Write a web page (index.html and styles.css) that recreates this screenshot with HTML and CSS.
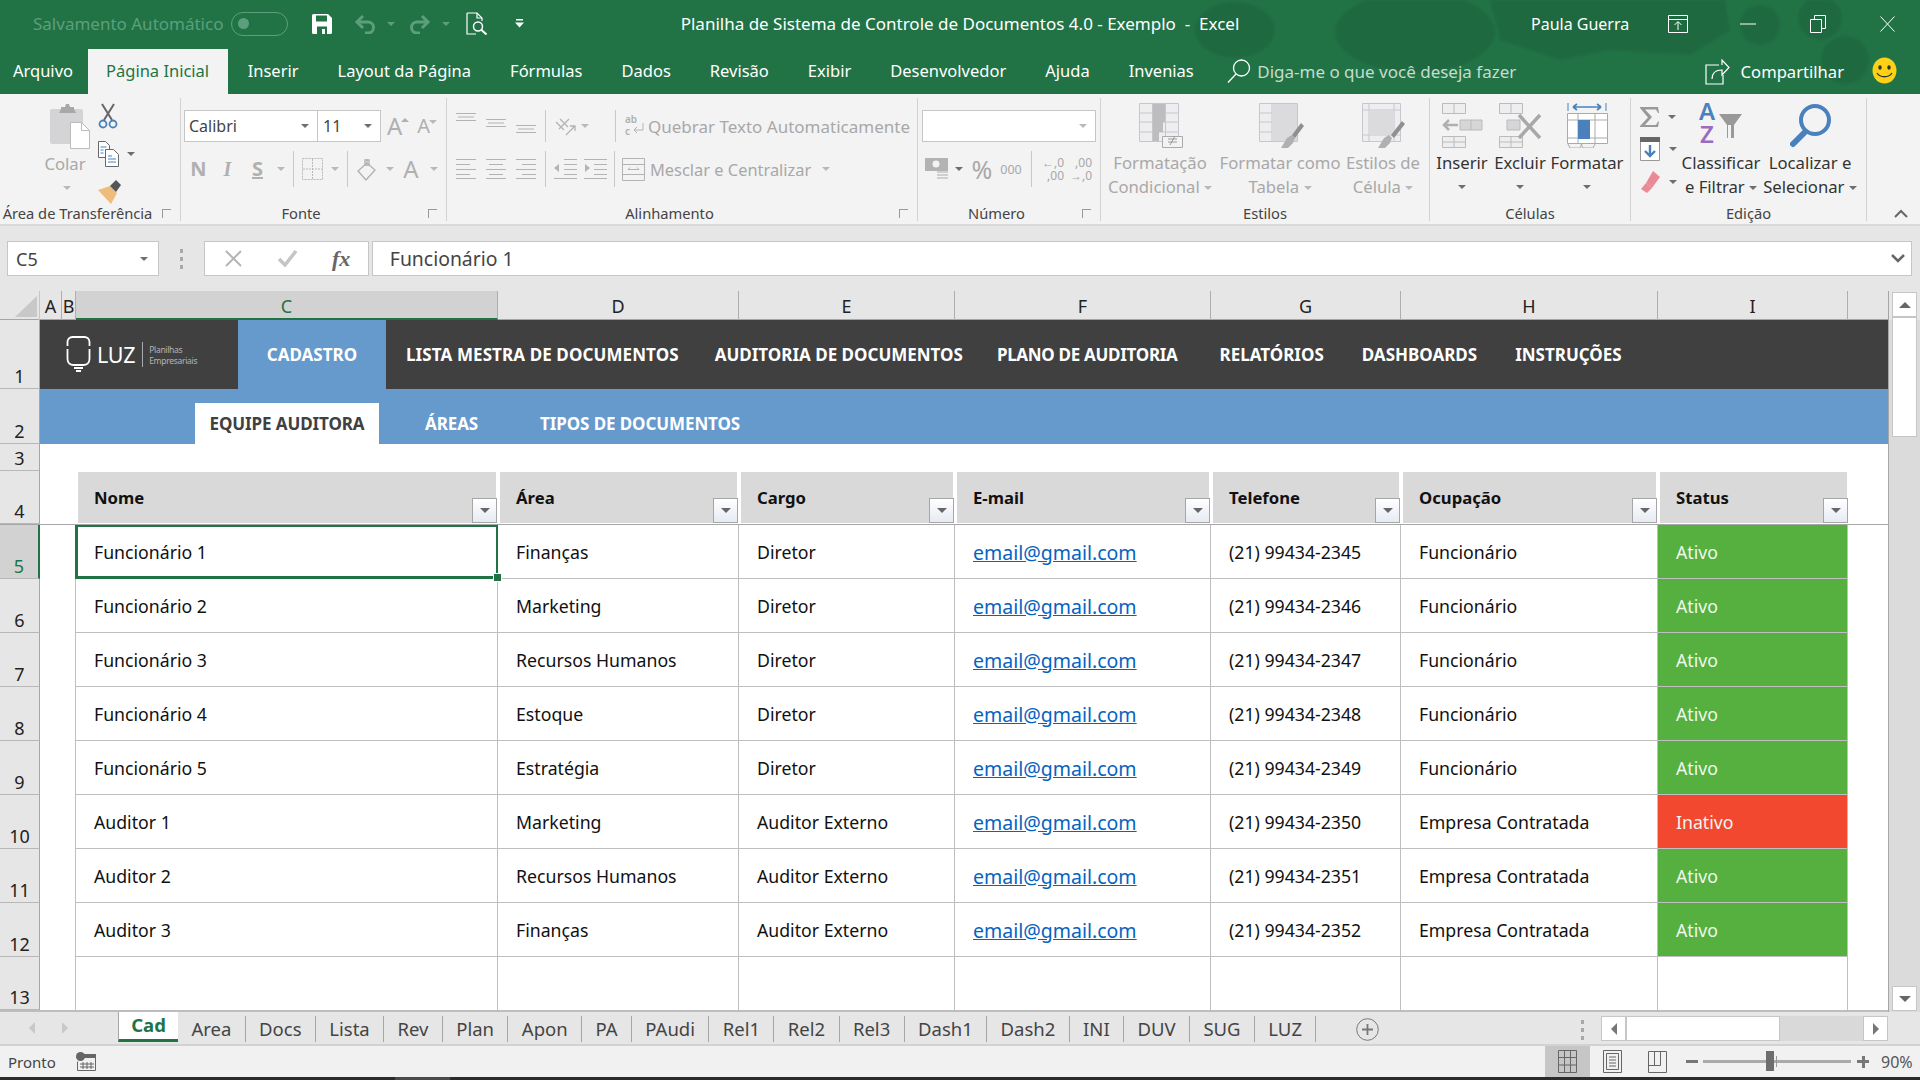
FILE: index.html
```html
<!DOCTYPE html>
<html lang="pt-BR">
<head>
    <meta charset="UTF-8">
    <title>Planilha de Sistema de Controle de Documentos 4.0 - Exemplo - Excel</title>
    <link rel="stylesheet" href="styles.css">
</head>
<body>
    <header class="app-head">
        <svg class="head-pattern" width="800" height="94" viewBox="0 0 800 94">
            <g fill="#1f633f">
                <ellipse cx="115" cy="30" rx="40" ry="28"/>
                <ellipse cx="295" cy="32" rx="80" ry="40"/>
                <path d="M370 0h235l5 30-40 25-80-5-50 10-60-20z"/>
                <circle cx="640" cy="25" r="20"/>
                <circle cx="700" cy="18" r="22"/>
                <circle cx="725" cy="60" r="24"/>
            </g>
        </svg>
        <div class="title-row">
            <div class="qat">
                <span class="autosave">Salvamento Automático</span>
                <span class="toggle"><i></i></span>
                <svg class="qa-save" width="20" height="20" viewBox="0 0 20 20"><path d="M0 1.5A1.5 1.5 0 0 1 1.500 0H16l4 4v14.500a1.500 1.500 0 0 1-1.500 1.500h-17A1.500 1.500 0 0 1 0 18.500z" fill="#fff"/><path d="M4 1.500h11v6H4z" fill="#217346"/><path d="M5 12.500h10V20h-2v-5h-3v5H5z" fill="#217346"/></svg>
                <svg class="qa-undo" width="22" height="20" viewBox="0 0 22 20" fill="none" stroke="#5d9f7c" stroke-width="3"><path d="M9 2 3 8l6 6"/><path d="M3 8h11a5.500 5.500 0 0 1 0 11h-3"/></svg>
                <span class="caret qa-c1"></span>
                <svg class="qa-redo" width="22" height="20" viewBox="0 0 22 20" fill="none" stroke="#5d9f7c" stroke-width="3"><path d="m13 2 6 6-6 6"/><path d="M19 8H8a5.500 5.500 0 0 0 0 11h3"/></svg>
                <span class="caret qa-c2"></span>
                <svg class="qa-print" width="22" height="23" viewBox="0 0 22 23" fill="none" stroke="#fff" stroke-width="1.200"><path d="M1 1h10l5 5v3M1 1v21h9"/><path d="M11 1v5h5"/><circle cx="12" cy="14.500" r="4.500" stroke-width="1.500"/><path d="m15.500 18 5 4.500" stroke-width="2"/></svg>
                <svg class="qa-more" width="9" height="9" viewBox="0 0 9 9"><path d="M1 0h7v1.500H1zM0 3.500h9L4.500 8.500z" fill="#fff"/></svg>
            </div>
            <div class="doc-title">Planilha de Sistema de Controle de Documentos 4.0 - Exemplo &nbsp;- &nbsp;Excel</div>
            <div class="win-controls">
                <span class="user">Paula Guerra</span>
                <svg class="wc-ribbon" width="20" height="18" viewBox="0 0 20 18" fill="none" stroke="#fff"><path d="M.5.500h19v17H.5zM.5 4.500h19M10 15V7M6.500 10 10 6.500l3.500 3.500"/></svg>
                <svg class="wc-min" width="16" height="2" viewBox="0 0 16 2"><path d="M0 1h16" stroke="#fff"/></svg>
                <svg class="wc-max" width="16" height="18" viewBox="0 0 16 18" fill="none" stroke="#fff"><path d="M.5 4.500h11v13H.5zM4.500 4.500v-4h11v13h-4"/></svg>
                <svg class="wc-close" width="15" height="16" viewBox="0 0 15 16" fill="none" stroke="#fff"><path d="m.5.500 14 15M14.500.500l-14 15"/></svg>
            </div>
        </div>
        <nav class="tab-row">
            <a class="rtab first">Arquivo</a>
            <a class="rtab active">Página Inicial</a>
            <a class="rtab">Inserir</a>
            <a class="rtab">Layout da Página</a>
            <a class="rtab">Fórmulas</a>
            <a class="rtab">Dados</a>
            <a class="rtab">Revisão</a>
            <a class="rtab">Exibir</a>
            <a class="rtab">Desenvolvedor</a>
            <a class="rtab">Ajuda</a>
            <a class="rtab">Invenias</a>
            <span class="tell-me">
                <svg width="24" height="24" viewBox="0 0 24 24" fill="none" stroke="#fff" stroke-width="1.300"><circle cx="14.500" cy="9" r="8"/><path d="M9 15 1 23.500"/></svg>
                Diga-me o que você deseja fazer
            </span>
            <span class="share">
                <svg width="25" height="26" viewBox="0 0 25 26" fill="none" stroke="#fff" stroke-width="1.200"><path d="M14 6H1v19h17v-9"/><path d="M7 20c0-6 4-9 10-9v5l7-7.500L17 1v5"/></svg>
                Compartilhar
            </span>
            <svg class="smiley" width="25" height="27" viewBox="0 0 25 27"><ellipse cx="12.500" cy="13.500" rx="12" ry="13" fill="#fcd116"/><ellipse cx="8" cy="10.500" rx="1.700" ry="2.300" fill="#333"/><ellipse cx="17" cy="10.500" rx="1.700" ry="2.300" fill="#333"/><path d="M5 16c3 5 12 5 15 0" fill="none" stroke="#333" stroke-width="1.300"/></svg>
        </nav>
    </header>

    <section class="ribbon">
        <div class="group g-clip">
            <div class="group-body">
                <div class="big-btn paste dis">
                    <svg width="41" height="46" viewBox="0 0 41 46"><path d="M0 8a2 2 0 0 1 2-2h29a2 2 0 0 1 2 2v33H2a2 2 0 0 1-2-2z" fill="#d4d3d6"/><path d="M11 6V4h4l1-3h3l1 3h4v2l2 4H9z" fill="#a8a8a8"/><path d="M20.500 19.500h11l8 8v18h-19z" fill="#fff" stroke="#bcbcbc"/><path d="M31.500 19.500v8h8" fill="none" stroke="#bcbcbc"/></svg>
                    <span>Colar</span>
                    <i class="caret dim"></i>
                </div>
                <div class="clip-tools">
                    <svg width="20" height="27" viewBox="0 0 20 27" fill="none"><path d="M4 1l10 16M16 1 6 17" stroke="#666" stroke-width="2"/><circle cx="5" cy="21" r="3.500" stroke="#4a81bd" stroke-width="1.800"/><circle cx="15" cy="21" r="3.500" stroke="#4a81bd" stroke-width="1.800"/></svg>
                    <div class="copy-row">
                        <svg width="21" height="26" viewBox="0 0 21 26" fill="none" stroke="#666"><path d="M.5.500h7l4 4v12H.5z" fill="#fff"/><path d="M7.500 8.500h8l5 5v12h-13z" fill="#fff"/><path d="M10 15h4M10 18h8M10 21h8" stroke="#4a81bd"/><path d="M2.500 6h6M2.500 9h3M2.500 12h3" stroke="#4a81bd"/></svg>
                        <i class="caret"></i>
                    </div>
                    <svg width="24" height="25" viewBox="0 0 24 25"><path d="M0 11 12 7l7 7-6 11z" fill="#eebc7b"/><path d="M12 7l6-6 5 5-5 7z" fill="#555"/></svg>
                </div>
            </div>
            <div class="group-label"><span>Área de Transferência</span><i class="launcher"></i></div>
        </div>

        <div class="group g-font">
            <div class="group-body rows">
                <div class="row-1">
                    <div class="combo font-name">Calibri<i class="caret"></i></div>
                    <div class="combo font-size">11<i class="caret"></i></div>
                    <span class="grow-a big">A<i class="caret up"></i></span>
                    <span class="grow-a small">A<i class="caret dim"></i></span>
                </div>
                <div class="row-2 font-tools">
                    <b class="ft n">N</b><em class="ft i">I</em><u class="ft s">S</u>
                    <i class="caret dim"></i><i class="vsep"></i>
                    <svg width="21" height="22" viewBox="0 0 21 22" fill="none" stroke="#b9b9b9" stroke-dasharray="2 1"><path d="M.5.500h20v21H.5zM10.500 1v20M1 11h19"/></svg>
                    <i class="caret dim"></i><i class="vsep"></i>
                    <svg width="20" height="23" viewBox="0 0 20 23" fill="none" stroke="#b0b0b0" stroke-width="1.300"><path d="M10 5 1 13l8 9 9-10zM10 5V1"/><path d="M8 2h4v5H8z"/></svg>
                    <i class="caret dim"></i>
                    <span class="ft a">A</span>
                    <i class="caret dim"></i>
                </div>
            </div>
            <div class="group-label"><span>Fonte</span><i class="launcher"></i></div>
        </div>

        <div class="group g-align">
            <div class="group-body rows">
                <div class="row-1 align-1">
                    <svg class="va-top" width="20" height="8" viewBox="0 0 20 8"><path d="M0 .500h20M2 4h16M0 7.500h20" stroke="#b3b3b3"/></svg>
                    <svg class="va-mid" width="20" height="8" viewBox="0 0 20 8"><path d="M0 .500h20M2 4h16M0 7.500h20" stroke="#b3b3b3"/></svg>
                    <svg class="va-bot" width="20" height="8" viewBox="0 0 20 8"><path d="M0 .500h20M2 4h16M0 7.500h20" stroke="#b3b3b3"/></svg>
                    <i class="vsep"></i>
                    <svg width="21" height="20" viewBox="0 0 21 20" fill="none" stroke="#b3b3b3" stroke-width="1.300"><path d="m1 6 8 8M5 3l8 8M4 13 14 3M11 19l9-9M20 15v-5h-5"/></svg>
                    <i class="caret dim"></i>
                    <i class="vsep to-end"></i>
                    <svg class="wrap-ic" width="21" height="28" viewBox="0 0 21 28"><text x="0" y="11" class="mini">ab</text><text x="0" y="23" class="mini">c</text><path d="M9 18h9v-7M9 18l3-3M9 18l3 3" fill="none" stroke="#b3b3b3"/></svg>
                    <span class="dis-text">Quebrar Texto Automaticamente</span>
                </div>
                <div class="row-2 align-2">
                    <svg width="20" height="20" viewBox="0 0 20 20"><path d="M0 .500h20M0 5.500h14M0 10.500h20M0 15.500h14M0 19.500h20" stroke="#b3b3b3"/></svg>
                    <svg width="20" height="20" viewBox="0 0 20 20"><path d="M0 .500h20M3 5.500h14M0 10.500h20M3 15.500h14M0 19.500h20" stroke="#b3b3b3"/></svg>
                    <svg width="20" height="20" viewBox="0 0 20 20"><path d="M0 .500h20M6 5.500h14M0 10.500h20M6 15.500h14M0 19.500h20" stroke="#b3b3b3"/></svg>
                    <i class="vsep"></i>
                    <svg width="23" height="20" viewBox="0 0 23 20"><path d="M10 .500h13M10 5.500h13M10 10.500h13M10 15.500h13M0 19.500h23" stroke="#b3b3b3"/><path d="M0 9l5-4v8z" fill="#b3b3b3"/></svg>
                    <svg width="23" height="20" viewBox="0 0 23 20"><path d="M0 .500h23M10 5.500h13M10 10.500h13M10 15.500h13M0 19.500h23" stroke="#b3b3b3"/><path d="M6 9 1 5v8z" fill="#b3b3b3"/></svg>
                    <i class="vsep"></i>
                    <svg width="23" height="23" viewBox="0 0 23 23" fill="none" stroke="#b3b3b3"><path d="M.5.500h22v22H.5zM.5 6.500h22M.5 16.500h22M6 11.500h11M6 11.500l2-2M17 11.500l-2-2"/></svg>
                    <span class="dis-text">Mesclar e Centralizar</span>
                    <i class="caret dim"></i>
                </div>
            </div>
            <div class="group-label"><span>Alinhamento</span><i class="launcher"></i></div>
        </div>

        <div class="group g-number">
            <div class="group-body rows">
                <div class="row-1"><div class="combo num-format"><i class="caret dim"></i></div></div>
                <div class="row-2 num-tools">
                    <svg width="25" height="24" viewBox="0 0 25 24"><path d="M0 1h23v13H0z" fill="#b3b3b3"/><circle cx="11" cy="7" r="3.500" fill="#f3f3f3"/><path d="M12 14h11v2H12zM12 17h11v2H12zM12 20h11v2H12z" fill="#cfcfcf"/></svg>
                    <i class="caret"></i>
                    <span class="pct">%</span>
                    <span class="thou">000</span>
                    <i class="vsep"></i>
                    <span class="dec"><span>←,0</span><span>,00</span></span>
                    <span class="dec"><span>,00</span><span>→,0</span></span>
                </div>
            </div>
            <div class="group-label"><span>Número</span><i class="launcher"></i></div>
        </div>

        <div class="group g-styles">
            <div class="group-body big-row">
                <div class="big-btn dis cond">
                    <svg width="44" height="45" viewBox="0 0 44 45" fill="#eeedf0" stroke="#c8c6cc"><path d="M.5.500h39v38H.5zM13.500 1v38M26.500 1v38M1 10h38M1 19h38M1 29h38"/><path d="M14 1h12v9H14zM14 10h12v9H14zM14 19h10v10H14zM14 29h6v9h-6z" fill="#bdbcbf" stroke="none"/><path d="M23.500 33.500h20v11h-20z" fill="#f3f3f3" stroke="#aaa"/><path d="M29 39h9M29 36h9M36 33l-5 9" stroke="#999" fill="none"/></svg>
                    <span>Formatação</span>
                    <span>Condicional <i class="caret dim"></i></span>
                </div>
                <div class="big-btn dis table">
                    <svg width="45" height="45" viewBox="0 0 45 45"><path d="M.5.500h38v38H.5z" fill="#eeedf0" stroke="#c8c6cc"/><path d="M13 1v38M1 10h38M1 19h38M1 29h38" stroke="#c8c6cc"/><path d="M13 1h25v37H13z" fill="#dbdadc"/><path d="m22 45 6-10 5-3 3 3-2 5-5 5z" fill="#b0b0b0"/><path d="m33 32 9-12 3 3-9 12z" fill="#8f8f8f"/></svg>
                    <span>Formatar como</span>
                    <span>Tabela <i class="caret dim"></i></span>
                </div>
                <div class="big-btn dis cell">
                    <svg width="45" height="45" viewBox="0 0 45 45"><path d="M.5.500h38v38H.5z" fill="#eeedf0" stroke="#c8c6cc"/><path d="M7 1v38M32 1v38M1 7h38M1 32h38" stroke="#c8c6cc"/><path d="M7 7h25v25H7z" fill="#dbdadc"/><path d="m16 45 6-10 5-3 3 3-2 5-5 5z" fill="#b0b0b0"/><path d="m29 32 11-14 3 3-11 14z" fill="#8f8f8f"/></svg>
                    <span>Estilos de</span>
                    <span>Célula <i class="caret dim"></i></span>
                </div>
            </div>
            <div class="group-label plain"><span>Estilos</span></div>
        </div>

        <div class="group g-cells">
            <div class="group-body big-row">
                <div class="big-btn ins">
                    <svg width="41" height="45" viewBox="0 0 41 45" fill="#eeedf0" stroke="#bbb"><path d="M.5.500h23v10H.5zM12 1v10M.5 33.500h23v11H.5zM12 33v11M1 39h22"/><path d="M18 17h22v10H18zM29 17v10" fill="#d6d5d8"/><path d="M16 22H2m5-5-5 5 5 5" fill="none" stroke="#b0b0b0" stroke-width="2.500"/></svg>
                    <span>Inserir</span>
                    <i class="caret"></i>
                </div>
                <div class="big-btn del">
                    <svg width="43" height="45" viewBox="0 0 43 45" fill="#eeedf0" stroke="#bbb"><path d="M.5.500h23v10H.5zM12 1v10M.5 33.500h23v11H.5zM12 33v11M1 39h22"/><path d="M8 17h13v10H8z" fill="#d6d5d8"/><path d="M20 12l21 23M41 12 20 35" stroke="#a8a8a8" stroke-width="3.500"/></svg>
                    <span>Excluir</span>
                    <i class="caret"></i>
                </div>
                <div class="big-btn fmt">
                    <svg width="41" height="45" viewBox="0 0 41 45" fill="#fff" stroke="#aaa"><path d="M6 4h28M6 4l4-3M6 4l4 3M34 4l-4-3M34 4l-4 3" stroke="#4a81bd" stroke-width="1.600" fill="none"/><path d="M1 0v8M39 0v8" stroke="#4a81bd"/><path d="M.5 10.500h40v30H.5zM11 11v30M28 11v30M1 17h40M1 35h40"/><path d="M11 17h12v19H11z" fill="#4a81bd" stroke="none"/><path d="M1 41l2 4h10l2-4M14 41l2 4h10l2-4" fill="none"/></svg>
                    <span>Formatar</span>
                    <i class="caret"></i>
                </div>
            </div>
            <div class="group-label plain"><span>Células</span></div>
        </div>

        <div class="group g-edit">
            <div class="group-body big-row">
                <div class="edit-tools">
                    <div class="copy-row"><svg width="19" height="20" viewBox="0 0 19 20"><path d="M0 0h18l1 6h-1l-2-3.500H5l7 7.500-7 8h11l2-3.500h1l-1 5.500H0v-1l8-8.500L0 1z" fill="#999"/></svg><i class="caret"></i></div>
                    <div class="copy-row"><svg width="20" height="24" viewBox="0 0 20 24"><path d="M.5.500h19v23H.5z" fill="#fff" stroke="#999"/><path d="M0 0h20v5H0z" fill="#666"/><path d="M10 8v11m-5-5 5 5 5-5" fill="none" stroke="#4a81bd" stroke-width="2.400"/></svg><i class="caret"></i></div>
                    <div class="copy-row"><svg width="20" height="22" viewBox="0 0 20 22"><path d="M13 0l7 6-8 11-6-5z" fill="#ea8a96"/><path d="M6 12l6 5-5 5-6-4z" fill="#ea8a96"/></svg><i class="caret"></i></div>
                </div>
                <div class="big-btn sort">
                    <svg width="44" height="56" viewBox="0 0 44 56"><text x="0" y="26" class="az a-blue">A</text><text x="1" y="49" class="az z-purple">Z</text><path d="M20 20h23l-8 11v13h-7V31z" fill="#999"/><path d="M29 31h3v13h-3z" fill="#f3f3f3"/></svg>
                    <span>Classificar</span>
                    <span>e Filtrar <i class="caret"></i></span>
                </div>
                <div class="big-btn find">
                    <svg width="41" height="45" viewBox="0 0 41 45" fill="none" stroke="#4a81bd"><circle cx="25" cy="17" r="14" stroke-width="4"/><path d="m15 29-12 12" stroke-width="6" stroke-linecap="round"/></svg>
                    <span>Localizar e</span>
                    <span>Selecionar <i class="caret"></i></span>
                </div>
            </div>
            <div class="group-label plain"><span>Edição</span></div>
        </div>
        <svg class="collapse" width="14" height="9" viewBox="0 0 14 9"><path d="M1 8l6-6 6 6" fill="none" stroke="#666" stroke-width="2"/></svg>
    </section>

    <section class="formula-bar">
        <div class="name-box">C5<i class="caret"></i></div>
        <div class="fb-dots"><i></i><i></i><i></i></div>
        <div class="fb-btns">
            <svg width="17" height="17" viewBox="0 0 17 17"><path d="m1 1 15 15M16 1 1 16" stroke="#b5b5b5" stroke-width="2"/></svg>
            <svg width="20" height="17" viewBox="0 0 20 17"><path d="m1 9 6 6L18 1" fill="none" stroke="#c5c5c5" stroke-width="3.500"/></svg>
            <span class="fx">fx</span>
        </div>
        <div class="fb-input">Funcionário 1
            <svg width="14" height="9" viewBox="0 0 14 9"><path d="m1 1 6 6 6-6" fill="none" stroke="#666" stroke-width="2.500"/></svg>
        </div>
    </section>

    <section class="workbook">
        <div class="sheet">
            <div class="col-heads">
                <div class="corner"><i></i></div>
                <div class="ch">A</div><div class="ch">B</div><div class="ch sel">C</div><div class="ch">D</div><div class="ch">E</div><div class="ch">F</div><div class="ch">G</div><div class="ch">H</div><div class="ch">I</div><div class="ch end"></div>
            </div>

            <div class="hero-row">
                <div class="rh">1</div>
                <nav class="app-nav">
                    <div class="logo">
                        <svg width="25" height="37" viewBox="0 0 25 37" fill="none" stroke="#fff" stroke-width="1.800"><path d="M1.500 10V6A5 5 0 0 1 6.500 1h12a5 5 0 0 1 5 5v4"/><path d="M1.500 13v10c0 4 3 6 6 6h10c3 0 6-2 6-6V13"/><path d="M8 32h9M10 35h5" stroke-width="2"/></svg>
                        <span class="logo-luz">LUZ</span>
                        <span class="logo-sub"><span>Planilhas</span><span>Empresariais</span></span>
                    </div>
                    <a class="nav-item current">CADASTRO</a>
                    <a class="nav-item lista">LISTA MESTRA DE DOCUMENTOS</a>
                    <a class="nav-item audit">AUDITORIA DE DOCUMENTOS</a>
                    <a class="nav-item plano">PLANO DE AUDITORIA</a>
                    <a class="nav-item">RELATÓRIOS</a>
                    <a class="nav-item">DASHBOARDS</a>
                    <a class="nav-item">INSTRUÇÕES</a>
                </nav>
            </div>
            <div class="hero-row sub">
                <div class="rh">2</div>
                <nav class="sub-nav">
                    <a class="sub-item current">EQUIPE AUDITORA</a>
                    <a class="sub-item">ÁREAS</a>
                    <a class="sub-item">TIPOS DE DOCUMENTOS</a>
                </nav>
            </div>
            <div class="hero-row blank"><div class="rh">3</div></div>

            <div class="row head">
                <div class="rh">4</div><div></div>
                <div class="th">Nome<i class="filter"></i></div>
                <div class="th">Área<i class="filter"></i></div>
                <div class="th">Cargo<i class="filter"></i></div>
                <div class="th">E-mail<i class="filter"></i></div>
                <div class="th">Telefone<i class="filter"></i></div>
                <div class="th">Ocupação<i class="filter"></i></div>
                <div class="th">Status<i class="filter"></i></div>
                <div></div>
            </div>

            <div class="row">
                <div class="rh sel">5</div><div></div>
                <div class="td active">Funcionário 1</div><div class="td">Finanças</div><div class="td">Diretor</div><div class="td"><a class="mail">email@gmail.com</a></div><div class="td">(21) 99434-2345</div><div class="td">Funcionário</div><div class="td on">Ativo</div><div></div>
            </div>
            <div class="row">
                <div class="rh">6</div><div></div>
                <div class="td">Funcionário 2</div><div class="td">Marketing</div><div class="td">Diretor</div><div class="td"><a class="mail">email@gmail.com</a></div><div class="td">(21) 99434-2346</div><div class="td">Funcionário</div><div class="td on">Ativo</div><div></div>
            </div>
            <div class="row">
                <div class="rh">7</div><div></div>
                <div class="td">Funcionário 3</div><div class="td">Recursos Humanos</div><div class="td">Diretor</div><div class="td"><a class="mail">email@gmail.com</a></div><div class="td">(21) 99434-2347</div><div class="td">Funcionário</div><div class="td on">Ativo</div><div></div>
            </div>
            <div class="row">
                <div class="rh">8</div><div></div>
                <div class="td">Funcionário 4</div><div class="td">Estoque</div><div class="td">Diretor</div><div class="td"><a class="mail">email@gmail.com</a></div><div class="td">(21) 99434-2348</div><div class="td">Funcionário</div><div class="td on">Ativo</div><div></div>
            </div>
            <div class="row">
                <div class="rh">9</div><div></div>
                <div class="td">Funcionário 5</div><div class="td">Estratégia</div><div class="td">Diretor</div><div class="td"><a class="mail">email@gmail.com</a></div><div class="td">(21) 99434-2349</div><div class="td">Funcionário</div><div class="td on">Ativo</div><div></div>
            </div>
            <div class="row">
                <div class="rh">10</div><div></div>
                <div class="td">Auditor 1</div><div class="td">Marketing</div><div class="td">Auditor Externo</div><div class="td"><a class="mail">email@gmail.com</a></div><div class="td">(21) 99434-2350</div><div class="td">Empresa Contratada</div><div class="td off">Inativo</div><div></div>
            </div>
            <div class="row">
                <div class="rh">11</div><div></div>
                <div class="td">Auditor 2</div><div class="td">Recursos Humanos</div><div class="td">Auditor Externo</div><div class="td"><a class="mail">email@gmail.com</a></div><div class="td">(21) 99434-2351</div><div class="td">Empresa Contratada</div><div class="td on">Ativo</div><div></div>
            </div>
            <div class="row">
                <div class="rh">12</div><div></div>
                <div class="td">Auditor 3</div><div class="td">Finanças</div><div class="td">Auditor Externo</div><div class="td"><a class="mail">email@gmail.com</a></div><div class="td">(21) 99434-2352</div><div class="td">Empresa Contratada</div><div class="td on">Ativo</div><div></div>
            </div>
            <div class="row last">
                <div class="rh">13</div><div></div>
                <div class="td"></div><div class="td"></div><div class="td"></div><div class="td"></div><div class="td"></div><div class="td"></div><div class="td"></div><div></div>
            </div>
        </div>
        <div class="vscroll">
            <div class="sb-btn"><i class="caret up"></i></div>
            <div class="sb-thumb"></div>
            <div class="sb-btn bottom"><i class="caret"></i></div>
        </div>
    </section>

    <section class="sheet-tabs">
        <div class="tab-nav"><i class="tri left"></i><i class="tri right"></i></div>
        <a class="stab active">Cad</a>
        <a class="stab">Area</a>
        <a class="stab">Docs</a>
        <a class="stab">Lista</a>
        <a class="stab">Rev</a>
        <a class="stab">Plan</a>
        <a class="stab">Apon</a>
        <a class="stab">PA</a>
        <a class="stab">PAudi</a>
        <a class="stab">Rel1</a>
        <a class="stab">Rel2</a>
        <a class="stab">Rel3</a>
        <a class="stab">Dash1</a>
        <a class="stab">Dash2</a>
        <a class="stab">INI</a>
        <a class="stab">DUV</a>
        <a class="stab">SUG</a>
        <a class="stab">LUZ</a>
        <svg class="add-sheet" width="23" height="23" viewBox="0 0 23 23" fill="none" stroke="#777"><circle cx="11.500" cy="11.500" r="10.800"/><path d="M11.500 6v11M6 11.500h11" stroke-width="1.800"/></svg>
        <div class="fb-dots tabs-dots"><i></i><i></i><i></i></div>
        <div class="hscroll">
            <div class="sb-btn"><i class="tri left"></i></div>
            <div class="sb-thumb"></div>
            <div class="sb-btn end"><i class="tri right"></i></div>
        </div>
    </section>

    <footer class="status-bar">
        <span class="ready">Pronto</span>
        <svg class="macro" width="20" height="19" viewBox="0 0 20 19"><circle cx="4.500" cy="4.500" r="4.500" fill="#666"/><path d="M8 2h12v4H8z" fill="#666"/><path d="M1.500 9.500v9h18V6M4 12h14M4 15h14M7 10v7M11 10v7M15 10v7" fill="none" stroke="#666"/></svg>
        <div class="view-btns">
            <span class="view active"><svg width="19" height="23" viewBox="0 0 19 23" fill="none" stroke="#666"><path d="M.5.500h18v22H.5zM6.500 1v22M12.500 1v22M1 7.500h18M1 15h18"/></svg></span>
            <span class="view"><svg width="19" height="23" viewBox="0 0 19 23" fill="none" stroke="#666"><path d="M.5.500h18v22H.5z"/><path d="M3.500 3.500h12v16h-12zM6 7h7M6 10h7M6 13h7M6 16h7"/></svg></span>
            <span class="view"><svg width="19" height="22" viewBox="0 0 19 22" fill="none" stroke="#666"><path d="M.5.500h18v21H.5zM.5 14.500h12V1M6.500 1v13"/></svg></span>
        </div>
        <div class="zoom">
            <i class="z-minus"></i>
            <div class="slider"><i class="thumb"></i><i class="tick"></i></div>
            <i class="z-plus"></i>
            <span>90%</span>
        </div>
    </footer>
    <div class="taskbar-edge"><i></i></div>
</body>
</html>
```
FILE: styles.css
```css
/* Excel window, top to bottom */
* {
    box-sizing: border-box;
}

html, body {
    margin: 0;
    height: 1080px;
    overflow: hidden;
    background: #fff;
    font-family: "Noto Sans", "Open Sans", sans-serif;
    color: #222;
}

i {
    font-style: normal;
}

svg {
    display: block;
    flex: none;
}

.caret {
    display: inline-block;
    flex: none;
    width: 0;
    height: 0;
    border-left: 4px solid transparent;
    border-right: 4px solid transparent;
    border-top: 4px solid #6e6e6e;
}

.caret.dim {
    border-top-color: #b9b9b9;
}

.caret.up {
    border-top: 0;
    border-bottom: 4px solid #b0b0b0;
}

.vsep {
    display: block;
    width: 1px;
    height: 36px;
    background: #c9c9c9;
}

/* title bar and tabs */
.app-head {
    position: relative;
    height: 94px;
    background: #217346;
    color: #fff;
}

.head-pattern {
    position: absolute;
    right: 0;
    top: 0;
    opacity: .6;
    filter: blur(1px);
}

.title-row {
    position: relative;
    display: flex;
    align-items: center;
    height: 47px;
}

.qat {
    display: flex;
    align-items: center;
    width: 680px;
    padding-left: 33px;
}

.autosave {
    width: 198px;
    font-size: 17px;
    color: #5d9f7c;
    white-space: nowrap;
}

.toggle {
    display: flex;
    align-items: center;
    width: 57px;
    height: 24px;
    padding-left: 6px;
    border: 1px solid #5d9f7c;
    border-radius: 12px;
}

.toggle i {
    width: 11px;
    height: 11px;
    border-radius: 50%;
    background: #5d9f7c;
}

.qa-save { margin-left: 24px; }
.qa-undo { margin-left: 22px; }
.qa-redo { margin-left: 14px; }
.qa-print { margin-left: 16px; margin-top: -1px; }
.qa-more { margin-left: 27px; }

.qa-c1, .qa-c2 {
    margin-left: 11px;
    border-top-color: #5d9f7c;
}

.doc-title {
    width: 560px;
    font-size: 17px;
    text-align: center;
    white-space: nowrap;
}

.win-controls {
    display: flex;
    align-items: center;
    margin-left: 291px;
}

.user {
    width: 137px;
    font-size: 16px;
    white-space: nowrap;
}

.wc-min { margin-left: 52px; }
.wc-max { margin-left: 54px; }
.wc-close { margin-left: 54px; }

.tab-row {
    position: relative;
    display: flex;
    align-items: flex-end;
    height: 47px;
}

.rtab {
    display: flex;
    align-items: center;
    height: 45px;
    padding: 0 19.500px 2px;
    font-size: 16.500px;
    white-space: nowrap;
}

.rtab.first {
    padding: 0 15px 2px 13px;
}

.rtab.active {
    padding: 0 19px 2px 18px;
    background: #f3f3f3;
    color: #217346;
}

.tell-me {
    display: flex;
    align-items: center;
    gap: 6px;
    height: 45px;
    margin-left: 14px;
    font-size: 17px;
    color: #c6dccf;
    white-space: nowrap;
}

.tell-me svg {
    margin-top: -2px;
}

.share {
    display: flex;
    align-items: center;
    gap: 11px;
    height: 45px;
    margin-left: auto;
    font-size: 16.600px;
    white-space: nowrap;
}

.smiley {
    margin: 0 23px 10px 28px;
}

/* ribbon */
.ribbon {
    position: relative;
    display: flex;
    height: 132px;
    padding-top: 4px;
    background: #f3f3f3;
    border-bottom: 2px solid #d9d9d9;
    font-size: 16.700px;
}

.group {
    display: flex;
    flex-direction: column;
    flex: none;
    height: 123px;
    border-right: 1px solid #d2d2d2;
}

.g-clip { width: 181px; }
.g-font { width: 266px; }
.g-align { width: 471px; }
.g-number { width: 183px; }
.g-styles { width: 329px; }
.g-cells { width: 201px; }
.g-edit { width: 236px; }

.group-body {
    display: flex;
    flex: 1;
    min-height: 0;
}

.group-label {
    display: flex;
    flex: none;
    height: 14px;
    margin-bottom: 1px;
    font-size: 14.700px;
    line-height: 14px;
    color: #444;
    white-space: nowrap;
}

.group-label span {
    flex: 1;
    text-align: center;
}

.launcher {
    position: relative;
    flex: none;
    width: 25px;
}

.launcher::after {
    content: "";
    position: absolute;
    left: 7px;
    top: 3px;
    width: 8px;
    height: 8px;
    border-left: 1px solid #999;
    border-top: 1px solid #999;
}

.big-btn {
    display: flex;
    flex-direction: column;
    align-items: center;
    flex: none;
    padding-top: 5px;
    line-height: 24px;
    color: #333;
    white-space: nowrap;
}

.big-btn svg {
    margin-bottom: 3px;
}

.big-btn .caret {
    vertical-align: 3px;
}

.big-btn > .caret {
    margin-top: 10px;
}

.big-btn.dis {
    color: #a8a8a8;
}

/* clipboard */
.paste {
    width: 48px;
    margin-left: 43px;
}

.paste svg {
    margin-left: 6px;
}

.paste span {
    margin-left: -4px;
}

.clip-tools {
    display: flex;
    flex-direction: column;
    gap: 11px;
    padding: 5px 0 0 7px;
}

.clip-tools > svg:last-child {
    margin-top: 1px;
}

.copy-row {
    display: flex;
    align-items: center;
    gap: 8px;
}

/* two row groups */
.rows {
    flex-direction: column;
    padding: 12px 0 0 3px;
}

.row-1 {
    display: flex;
    align-items: center;
    height: 32px;
}

.row-2 {
    display: grid;
    align-items: center;
    justify-items: center;
    justify-content: start;
    height: 36px;
    margin-top: 9px;
}

.combo {
    display: flex;
    align-items: center;
    justify-content: space-between;
    height: 32px;
    padding: 0 8px 0 4px;
    background: #fff;
    border: 1px solid #c6c6c6;
    font-size: 16px;
    color: #444;
}

.font-name { width: 134px; }
.font-size { width: 64px; margin-left: -1px; padding-left: 5px; }

.grow-a {
    position: relative;
    color: #b0b0b0;
    line-height: 1;
}

.grow-a .caret {
    position: absolute;
    top: 4px;
    right: -7px;
}

.grow-a.big {
    margin-left: 6px;
    font-size: 24px;
}

.grow-a.small {
    margin-left: 15px;
    font-size: 20px;
}

.font-tools {
    grid-template-columns: 29px 29px 31px 15px 10px 28px 17px 8px 32px 13px 30px 16px;
    color: #b0b0b0;
}

.ft {
    font-size: 20px;
    line-height: 1;
    text-decoration: none;
}

.ft.n { font-weight: 700; }
.ft.i { font-family: "Liberation Serif", serif; font-weight: 700; }
.ft.s { font-weight: 700; text-decoration: underline; }
.ft.a { font-size: 24px; }

/* alignment */
.g-align .rows {
    padding-left: 4px;
}

.align-1 {
    display: grid;
    grid-template-columns: 30px 30px 30px 8px 32px 8px 27px 30px auto;
    justify-items: center;
    justify-content: start;
}

.align-2 {
    grid-template-columns: 30px 30px 30px 8px 32px 28px 10px 29px auto auto;
}

.g-align .row-1 .vsep {
    height: 32px;
}

.va-top { margin-top: -18px; }
.va-mid { margin-top: -6px; }
.va-bot { margin-top: 6px; }

.to-end, .wrap-ic {
    justify-self: end;
}

.dis-text {
    padding-left: 2px;
    color: #a8a8a8;
    font-size: 17px;
    white-space: nowrap;
}

.align-2 .dis-text {
    font-size: 16.400px;
}

.mini {
    font-size: 10px;
    font-weight: 600;
    fill: #b0b0b0;
}

.align-2 .caret {
    margin-left: 11px;
}

/* number */
.num-format {
    justify-content: flex-end;
    width: 174px;
    margin-left: 1px;
}

.num-tools {
    grid-template-columns: 27px 16px 30px 28px 12px 32px 24px;
    padding-left: 3px;
}

.pct {
    font-size: 25px;
    line-height: 1;
    color: #a8a8a8;
}

.thou {
    font-size: 12.500px;
    color: #a8a8a8;
}

.dec {
    display: flex;
    flex-direction: column;
    font-size: 12px;
    line-height: 13px;
    color: #a8a8a8;
    text-align: right;
    white-space: nowrap;
}

/* big buttons */
.big-row {
    position: relative;
}

.g-styles .big-row {
    padding-left: 59px;
}

.cond { width: 0; }
.table { width: 0; margin-left: 120px; }
.cell { width: 0; margin-left: 103px; }

.cond svg, .table svg, .cell svg {
    margin-left: 2px;
}

.g-cells .big-row {
    padding-left: 32px;
}

.ins { width: 0; }
.del { width: 0; margin-left: 58px; }
.fmt { width: 0; margin-left: 67px; }

.edit-tools {
    display: flex;
    flex-direction: column;
    gap: 10px;
    padding: 9px 0 0 9px;
}

.edit-tools .copy-row {
    gap: 9px;
}

.sort { width: 0; margin-left: 44px; }
.find { width: 0; margin-left: 89px; }

.sort svg {
    margin-top: -9px;
    margin-bottom: 1px;
}

.az {
    font-size: 24px;
    font-weight: 600;
}

.a-blue { fill: #4a81bd; }
.z-purple { fill: #9a6cbf; }

.collapse {
    position: absolute;
    right: 12px;
    top: 115px;
}

/* formula bar */
.formula-bar {
    display: flex;
    align-items: center;
    height: 65px;
    padding: 0 8px 0 7px;
    background: #e6e6e6;
}

.name-box {
    display: flex;
    align-items: center;
    justify-content: space-between;
    width: 152px;
    height: 35px;
    padding: 0 10px 0 8px;
    background: #fff;
    border: 1px solid #c6c6c6;
    font-size: 18px;
    color: #444;
}

.fb-dots {
    display: flex;
    flex-direction: column;
    gap: 4px;
    width: 45px;
    align-items: center;
}

.fb-dots i {
    width: 3px;
    height: 4px;
    background: #a8a8a8;
}

.fb-btns {
    display: flex;
    align-items: center;
    gap: 36px;
    width: 165px;
    height: 35px;
    padding-left: 20px;
    background: #fff;
    border: 1px solid #c6c6c6;
}

.fx {
    margin-left: -2px;
    font-family: "Liberation Serif", serif;
    font-style: italic;
    font-weight: 700;
    font-size: 22px;
    color: #666;
}

.fb-input {
    display: flex;
    align-items: center;
    justify-content: space-between;
    width: 1541px;
    height: 35px;
    margin-left: 3px;
    padding: 0 6px 0 17px;
    background: #fff;
    border: 1px solid #c6c6c6;
    font-size: 19.400px;
    color: #444;
}

/* worksheet */
.workbook {
    display: flex;
    height: 721px;
    background: #e6e6e6;
}

.sheet {
    width: 1889px;
    background: #fff;
    border-right: 1px solid #a6a6a6;
}

.col-heads {
    display: grid;
    grid-template-columns: 40px 22px 14px 422px 241px 216px 256px 190px 257px 190px 41px;
    height: 29px;
    background: #e6e6e6;
    border-bottom: 1px solid #a6a6a6;
}

.row {
    display: grid;
    grid-template-columns: 40px 35px 422px 241px 216px 256px 190px 257px 191px 40px;
    height: 54px;
}

.corner {
    border-right: 1px solid #c6c6c6;
}

.corner i {
    display: block;
    width: 22px;
    height: 21px;
    margin: 5px 0 0 15px;
    background: #c8c8c8;
    clip-path: polygon(100% 0, 100% 100%, 0 100%);
}

.ch {
    border-right: 1px solid #aeaeae;
    font-size: 18px;
    line-height: 30px;
    text-align: center;
    color: #222;
}

.ch.sel {
    background: #d2d2d2;
    color: #217346;
    border-bottom: 2px solid #217346;
    height: 29px;
}

.ch.end {
    border: 0;
}

.rh {
    display: flex;
    align-items: flex-end;
    justify-content: center;
    background: #e6e6e6;
    border-right: 1px solid #a6a6a6;
    border-bottom: 1px solid #b8b8b8;
    font-size: 18px;
    line-height: 24px;
    color: #222;
}

.rh.sel {
    background: #d2d2d2;
    color: #217346;
    border-right: 2px solid #217346;
}

.hero-row {
    display: grid;
    grid-template-columns: 40px 1fr;
    height: 69px;
}

.app-nav {
    display: flex;
    align-items: stretch;
    background: #404040;
    color: #fff;
}

.logo {
    display: flex;
    align-items: center;
    width: 198px;
    padding-left: 26px;
}

.logo-luz {
    margin-left: 6px;
    font-size: 21.500px;
    letter-spacing: -.3px;
}

.logo-sub {
    display: flex;
    flex-direction: column;
    justify-content: center;
    height: 25px;
    margin-left: 7px;
    padding-left: 6px;
    border-left: 1px solid #aaa;
    font-size: 8.500px;
    line-height: 11px;
    letter-spacing: -.3px;
    color: #b5b5b5;
}

.nav-item {
    display: flex;
    align-items: center;
    margin-right: 38px;
    font-size: 17px;
    font-weight: 700;
    white-space: nowrap;
}

.nav-item.current {
    width: 148px;
    justify-content: center;
    margin-right: 20px;
    background: #6699cc;
}

.nav-item.lista {
    margin-right: 36px;
    letter-spacing: .1px;
}

.nav-item.audit {
    margin-right: 34px;
}

.nav-item.plano {
    margin-right: 42px;
    letter-spacing: -.3px;
}

.hero-row.sub {
    height: 55px;
}

.sub-nav {
    display: flex;
    align-items: flex-end;
    padding-left: 155px;
    background: #6699cc;
    color: #fff;
}

.sub-item {
    display: flex;
    align-items: center;
    justify-content: center;
    height: 41px;
    margin-right: 62px;
    font-size: 17px;
    font-weight: 700;
    letter-spacing: -.1px;
    white-space: nowrap;
}

.sub-item.current {
    width: 184px;
    margin-right: 46px;
    background: #fff;
    color: #404040;
}

.hero-row.blank {
    height: 27px;
}

.row.head {
    border-bottom: 1px solid #a6a6a6;
}

.th {
    position: relative;
    display: flex;
    align-items: center;
    height: 51px;
    margin: 1px 1px 0 3px;
    padding: 0 0 1px 16px;
    background: #d9d9d9;
    font-size: 16.700px;
    font-weight: 700;
    color: #111;
}

.filter {
    position: absolute;
    right: -1px;
    bottom: 0;
    display: flex;
    align-items: center;
    justify-content: center;
    width: 25px;
    height: 25px;
    background: linear-gradient(#fff, #e6ebf3);
    border: 1px solid #a6a6a6;
}

.filter::after {
    content: "";
    border-left: 5px solid transparent;
    border-right: 5px solid transparent;
    border-top: 5px solid #666;
}

.td {
    position: relative;
    display: flex;
    align-items: center;
    padding: 1px 0 0 18px;
    border-left: 1px solid #bfbfbf;
    border-bottom: 1px solid #bfbfbf;
    font-size: 17.700px;
    color: #111;
    white-space: nowrap;
}

.td:nth-child(9) {
    border-right: 1px solid #bfbfbf;
}

.td.active {
    z-index: 1;
    margin-right: -1px;
    box-shadow: inset 0 0 0 2px #217346;
    border-color: #217346;
}

.td.active::after {
    content: "";
    position: absolute;
    right: -4px;
    bottom: -4px;
    width: 7px;
    height: 7px;
    background: #217346;
    border: 1px solid #fff;
}

.mail {
    font-size: 19.500px;
    color: #0563c1;
    text-decoration: underline;
}

.td.on, .td.off {
    color: #f0f7ec;
}

.td.on { background: #55b03f; }
.td.off { background: #f2482f; }

.row.last {
    height: 55px;
    border-bottom: 2px solid #bdbdbd;
}

.row.last .td {
    border-bottom: 0;
}

/* scroll bars */
.vscroll {
    display: flex;
    flex-direction: column;
    width: 31px;
    padding: 1px 3px 0 3px;
    background: linear-gradient(#e6e6e6 29px, #dbdbdb 29px);
}

.sb-btn {
    display: flex;
    align-items: center;
    justify-content: center;
    flex: none;
    width: 25px;
    height: 25px;
    background: #fff;
    border: 1px solid #c6c6c6;
}

.sb-btn .caret {
    border-left-width: 6px;
    border-right-width: 6px;
    border-top-width: 6px;
    border-top-color: #666;
}

.sb-btn .caret.up {
    border-bottom: 6px solid #666;
    border-top: 0;
}

.sb-thumb {
    height: 120px;
    background: #fff;
    border: 1px solid #c6c6c6;
}

.sb-btn.bottom {
    margin-top: auto;
    margin-bottom: 1px;
}

.sheet-tabs {
    display: flex;
    align-items: flex-start;
    height: 34px;
    background: #e6e6e6;
    border-bottom: 2px solid #d2d2d2;
}

.tab-nav {
    display: flex;
    align-items: center;
    gap: 27px;
    width: 118px;
    height: 32px;
    padding-left: 29px;
}

.tri {
    display: block;
    width: 0;
    height: 0;
    border-top: 6px solid transparent;
    border-bottom: 6px solid transparent;
}

.tri.left { border-right: 6px solid #777; }
.tri.right { border-left: 6px solid #777; }

.tab-nav .tri.left { border-right-color: #c8c8c8; }
.tab-nav .tri.right { border-left-color: #c8c8c8; }

.stab {
    display: flex;
    align-items: center;
    height: 26px;
    margin-top: 4px;
    padding: 0 13.400px 2px;
    border-right: 1px solid #a6a6a6;
    font-size: 18.500px;
    color: #444;
}

.stab.active {
    justify-content: center;
    width: 60px;
    height: 30px;
    margin-top: 0;
    padding: 0 0 2px;
    background: #fff;
    border: 0;
    border-bottom: 3px solid #217346;
    border-left: 1px solid #a6a6a6;
    color: #217346;
    font-weight: 700;
}

.add-sheet {
    margin: 6px 0 0 40px;
}

.tabs-dots {
    width: 10px;
    margin: 8px 0 0 auto;
}

.hscroll {
    display: flex;
    width: 287px;
    height: 25px;
    margin: 4px 32px 0 14px;
    background: #d9d9d9;
}

.hscroll .sb-thumb {
    width: 154px;
    height: 25px;
    margin-right: auto;
}

/* status bar */
.status-bar {
    display: flex;
    align-items: center;
    height: 31px;
    padding-left: 8px;
    background: #f1f1f1;
}

.ready {
    width: 68px;
    font-size: 15px;
    color: #444;
}

.view-btns {
    display: flex;
    margin-left: 1449px;
}

.view {
    display: flex;
    align-items: center;
    justify-content: center;
    width: 45px;
    height: 31px;
}

.view.active {
    background: #c6c6c6;
}

.zoom {
    display: flex;
    align-items: center;
    margin-left: 6px;
    font-size: 16px;
    color: #555;
}

.z-minus, .z-plus {
    position: relative;
    width: 12px;
    height: 3px;
    background: #777;
}

.z-plus::after {
    content: "";
    position: absolute;
    left: 4.500px;
    top: -4.500px;
    width: 3px;
    height: 12px;
    background: #777;
}

.slider {
    position: relative;
    width: 148px;
    height: 3px;
    margin: 0 6px 0 5px;
    background: #aaa;
}

.thumb {
    position: absolute;
    left: 63px;
    top: -9px;
    width: 8px;
    height: 20px;
    background: #6e6e6e;
}

.tick {
    position: absolute;
    left: 73px;
    top: -4px;
    width: 1px;
    height: 11px;
    background: #999;
}

.zoom span {
    margin-left: 12px;
    white-space: nowrap;
}

.taskbar-edge {
    height: 3px;
    background: #2b2b2b;
}

.taskbar-edge i {
    display: block;
    width: 55px;
    height: 3px;
    margin-left: 395px;
    background: #4a4a4a;
}
```
